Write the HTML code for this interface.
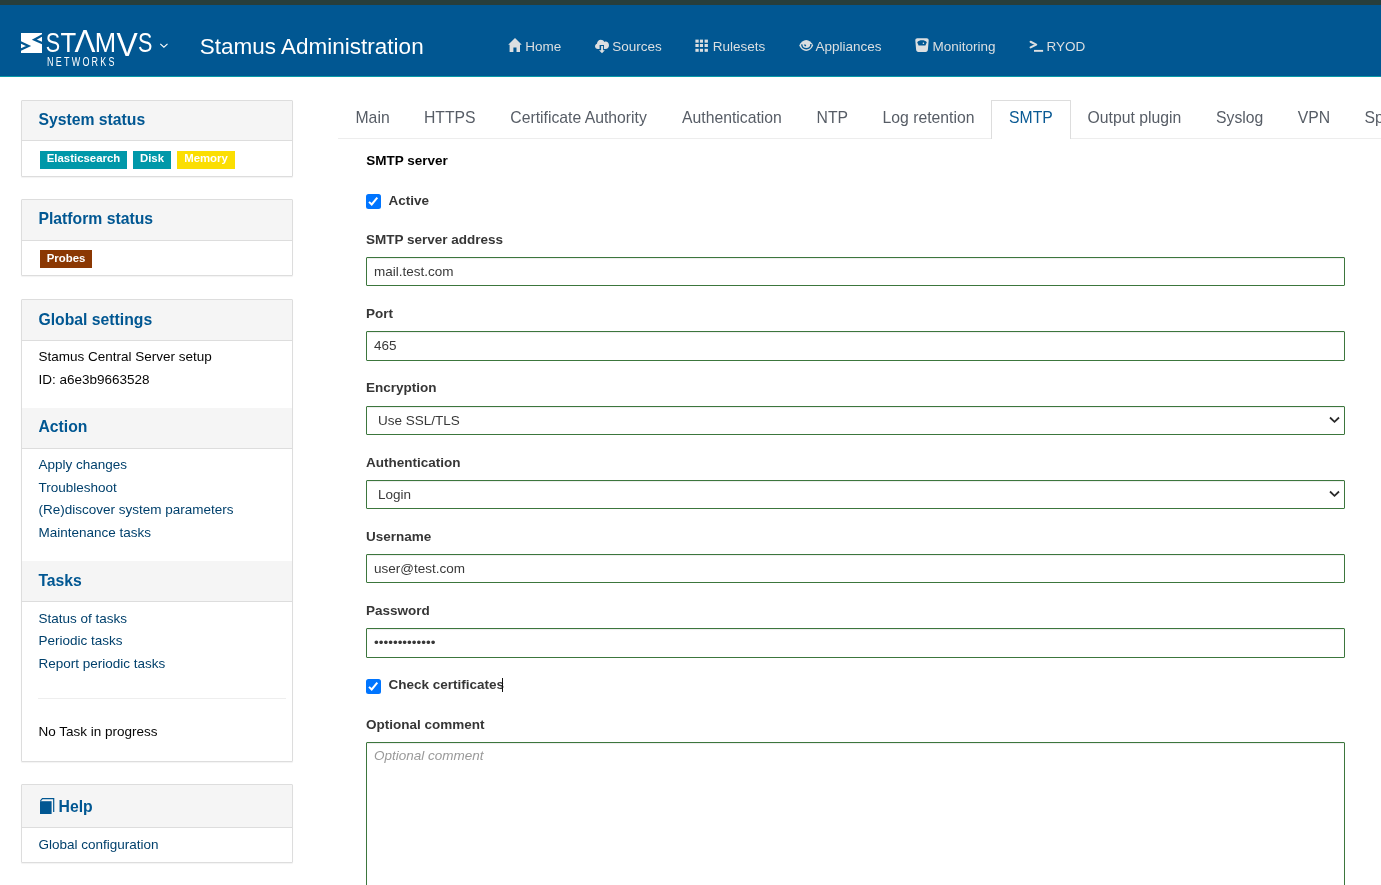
<!DOCTYPE html>
<html lang="en">
<head>
<meta charset="utf-8">
<title>Stamus Administration</title>
<style>
*{box-sizing:border-box}
html,body{margin:0;padding:0}
body{width:1381px;height:885px;overflow:hidden;background:#fff;color:#050505;
  font-family:"Liberation Sans",Arial,sans-serif;font-size:13.5px;line-height:22.5px;position:relative;will-change:transform}
a{color:#00406c;text-decoration:none}
.topbar{position:absolute;left:0;top:0;width:1381px;height:5px;background:#283e3b}
.navbar{position:absolute;left:0;top:5px;width:1381px;height:72px;background:#015792;border-bottom:1px solid #0a9aa8}
.brand{position:absolute;left:0;top:0;width:180px;height:71px;display:block}
.brand svg{position:absolute;left:0;top:0}
.title{position:absolute;left:199.8px;top:28.5px;font-size:22.5px;line-height:26px;color:#fff;white-space:nowrap}
.nav{position:absolute;left:491px;top:30px;margin:0;padding:0;list-style:none;display:flex;white-space:nowrap}
.nav li{display:block;margin:0;padding:0}
.nav a{display:block;color:#dcdfe1;padding:0 16.875px;font-size:13.5px;line-height:24px;height:24px}
.gi{display:inline-block;width:13.5px;height:13.5px;vertical-align:-0.5px;position:relative}
.gi svg{position:absolute;left:0;top:0;overflow:visible}

/* sidebar */
.sidebar{position:absolute;left:21px;top:100px;width:272px}
.panel{border:1px solid #ddd;border-radius:1px;background:#fff;margin:0 0 22px 0;box-shadow:0 1px 1px rgba(0,0,0,.05)}
.panel-heading{background:#f5f5f5;border-bottom:1px solid #ddd;height:41px;padding:0 0 0 16.4px}
.panel-heading h2{margin:0;font-size:15.75px;line-height:38px;font-weight:bold;color:#015792}
.panel-body{padding:0 0 0 16.4px}
.lbl{display:inline-block;height:18px;line-height:15px;font-size:11.4px;font-weight:bold;color:#fff;padding:0;text-align:center;vertical-align:top;margin-right:6px;white-space:nowrap}
.lbl.teal{background:#0098a9}
.lbl.yellow{background:#fbde02}
.lbl.brown{background:#8b3803}
ul.links{list-style:none;margin:0;padding:0}
ul.links li{height:22.5px;line-height:22.5px;white-space:nowrap}

/* main */
.main{position:absolute;left:338px;top:100px;width:1043px;height:785px;overflow:hidden}
.tabs{position:absolute;left:0;top:0;width:1100px;height:39px;border-bottom:1px solid #ededed;margin:0;padding:0;list-style:none}
.tabs li{position:absolute;top:0;height:39px;font-size:15.75px;line-height:36.5px;color:#575d66;white-space:nowrap}
.tabs li.active{border:1px solid #ddd;border-bottom:0;background:#fff;color:#0a5a94;height:39px;border-radius:1px 1px 0 0}
form{position:absolute;left:28px;top:0;width:979px;margin:0}
legend{position:absolute;left:0.3px;top:50px;font-size:13.5px;font-weight:bold;color:#000;line-height:22px;padding:0}
label{position:absolute;left:0;font-size:13.5px;font-weight:bold;color:#363636;line-height:22px;white-space:nowrap}
.fc{position:absolute;left:0;width:979px;height:29.25px;border:1px solid #3c763d;border-radius:1px;background:#fff;
  font-family:"Liberation Sans",Arial,sans-serif;font-size:13.5px;color:#393939;padding:0 7px;margin:0;outline:0;line-height:27px;
  box-shadow:inset 0 1px 1px rgba(0,0,0,.075)}
div.fc{padding-left:11px}
.fc svg{position:absolute;right:4px;top:9.6px}
textarea.fc{height:200px;padding:2px 7px;resize:none;line-height:22px;overflow:hidden}
textarea.fc::placeholder{color:#999;font-style:italic;opacity:1}
.cb{position:absolute;left:0.1px;width:14.8px;height:14.7px;background:#0075ff;border-radius:2.5px}
.cb svg{position:absolute;left:0;top:0}
.caret{position:absolute;left:136px;top:577.5px;width:1px;height:14px;background:#111}
</style>
</head>
<body>
<div class="topbar"></div>
<nav class="navbar">
  <a class="brand" href="#">
    <svg width="180" height="71" viewBox="0 5 180 71">
      <rect x="21" y="33" width="21" height="20" fill="#fff"/>
      <svg x="21" y="33" width="21" height="20" viewBox="21 33 21 20"><path d="M43.5 34.6 L34.3 39.7 L43.5 43.68" fill="none" stroke="#015792" stroke-width="2.2" stroke-linejoin="miter" stroke-miterlimit="10"/><path d="M19.5 41.8 L28.5 46 L19.5 50.1" fill="none" stroke="#015792" stroke-width="2.2" stroke-linejoin="miter" stroke-miterlimit="10"/></svg>
      <g fill="#fff" font-family="Liberation Sans, Arial, sans-serif">
        <text transform="translate(45.8 52) scale(0.78 1)" font-size="27.6">S</text>
        <text transform="translate(60.6 52) scale(0.93 1)" font-size="27.6">T</text>
        <text transform="translate(74.4 52) scale(0.98 1)" font-size="32">Λ</text>
        <text transform="translate(94.7 52) scale(0.93 1)" font-size="27.6">M</text>
        <text transform="translate(116.6 55.6) scale(0.98 1)" font-size="32.5">V</text>
        <text transform="translate(138 52) scale(0.78 1)" font-size="27.6">S</text>
        <text transform="translate(47 66) scale(0.66 1)" font-size="13.6" letter-spacing="3.4">NETWORKS</text>
      </g>
      <path d="M160.3 43.8 L163.9 47.2 L167.5 43.8" fill="none" stroke="#fff" stroke-width="1.1"/>
    </svg>
  </a>
  <span class="title">Stamus Administration</span>
  <ul class="nav">
    <li><a href="#"><span class="gi"><svg width="14" height="14" viewBox="0 0 14 14" style="left:0.5px"><path d="M7 0 L13.8 6.8 H12 V14 H8.5 V9.5 H5.4 V14 H1.6 V6.8 H0.2 Z" fill="#dcdfe1"/></svg></span> Home</a></li>
    <li><a href="#"><span class="gi"><svg width="14" height="16" viewBox="0 0 14 16"><path d="M3 11 C1.2 11 0 9.8 0 8.3 C0 7 0.9 6 2 5.7 C2 3.4 3.6 1.7 5.8 1.7 C7.4 1.7 8.7 2.6 9.3 3.9 C9.7 3.7 10.2 3.6 10.6 3.6 C12.5 3.6 14 5.1 14 7.2 C14 9.3 12.5 11 10.5 11 H9 V7 H4.6 V11 Z M6.1 8 H8.1 V12.3 H9.9 L7 15.3 L4 12.3 H6.1 Z" fill="#dcdfe1"/></svg></span> Sources</a></li>
    <li><a href="#"><span class="gi"><svg width="14" height="14" viewBox="0 0 14 14"><g fill="#dcdfe1"><rect x="0.4" y="1.6" width="3.3" height="3.1"/><rect x="4.9" y="1.6" width="3.1" height="3.1"/><rect x="9.6" y="1.6" width="3.3" height="3.1"/><rect x="0.4" y="6" width="3.3" height="3"/><rect x="4.9" y="6" width="3.1" height="3"/><rect x="9.6" y="6" width="3.3" height="3"/><rect x="0.4" y="10.8" width="3.3" height="3"/><rect x="4.9" y="10.8" width="3.1" height="3"/><rect x="9.6" y="10.8" width="3.3" height="3"/></g></svg></span> Rulesets</a></li>
    <li><a href="#"><span class="gi"><svg width="15" height="14" viewBox="0 0 15 14" style="top:1px"><path d="M0.2 6.6 C1.8 3.2 4.4 1.1 7.2 1.1 C10 1.1 12.6 3.2 14.2 6.6 C12.6 10 10 12.1 7.2 12.1 C4.4 12.1 1.8 10 0.2 6.6 Z" fill="#dcdfe1"/><path d="M2.9 5.3 C2.4 8.2 4.6 9.7 7.3 9.7 C10 9.7 12.2 8.2 11.9 5" fill="none" stroke="#015792" stroke-width="1.4"/><ellipse cx="6.2" cy="6.3" rx="1.1" ry="0.8" transform="rotate(40 6.2 6.3)" fill="#015792"/></svg></span> Appliances</a></li>
    <li><a href="#"><span class="gi"><svg width="14" height="14" viewBox="0 0 14 14"><path d="M2.4 0.3 H11.6 C12.9 0.3 13.7 1.1 13.7 2.4 L12.9 11.6 C12.8 13 12 14 10.6 14 H3.4 C2 14 1.2 13 1.1 11.6 L0.3 2.4 C0.3 1.1 1.1 0.3 2.4 0.3 Z" fill="#dcdfe1"/><path d="M2.2 4.3 C3.4 2.7 5 2.2 7 2.2 C9 2.2 10.6 2.7 11.8 4.3 L10.4 7.4 H3.6 Z" fill="#015792"/><circle cx="8.4" cy="5.3" r="0.8" fill="#eee"/></svg></span> Monitoring</a></li>
    <li><a href="#"><span class="gi"><svg width="14" height="14" viewBox="0 0 14 14"><path d="M1.6 3.8 L7.2 6.6 L1.6 9.4" fill="none" stroke="#dcdfe1" stroke-width="2.1" stroke-linecap="round" stroke-linejoin="round"/><rect x="5" y="11.9" width="9.1" height="1.9" fill="#dcdfe1"/></svg></span> RYOD</a></li>
  </ul>
</nav>

<aside class="sidebar">
  <section class="panel" style="height:77px">
    <div class="panel-heading" style="height:40px"><h2>System status</h2></div>
    <div class="panel-body" style="padding-top:10px;padding-left:18px"><span class="lbl teal" style="width:87px">Elasticsearch</span><span class="lbl teal" style="width:38px">Disk</span><span class="lbl yellow" style="width:58px">Memory</span></div>
  </section>
  <section class="panel" style="height:77px;margin-bottom:23px">
    <div class="panel-heading"><h2>Platform status</h2></div>
    <div class="panel-body" style="padding-top:9px;padding-left:18px"><span class="lbl brown" style="width:52px;line-height:17px">Probes</span></div>
  </section>
  <section class="panel" style="height:463px">
    <div class="panel-heading"><h2 style="line-height:39px">Global settings</h2></div>
    <div class="panel-body" style="height:67px;padding-top:5px">
      <div style="height:23px">Stamus Central Server setup</div>
      <div style="height:23px">ID: a6e3b9663528</div>
    </div>
    <div class="panel-heading"><h2 style="line-height:38.5px">Action</h2></div>
    <div class="panel-body" style="height:112px;padding-top:4.6px">
      <ul class="links">
        <li style="height:23px"><a href="#">Apply changes</a></li>
        <li style="height:22px"><a href="#">Troubleshoot</a></li>
        <li style="height:23px"><a href="#">(Re)discover system parameters</a></li>
        <li><a href="#">Maintenance tasks</a></li>
      </ul>
    </div>
    <div class="panel-heading"><h2 style="line-height:40px">Tasks</h2></div>
    <div class="panel-body" style="height:159px;padding-top:5.5px">
      <ul class="links">
        <li><a href="#">Status of tasks</a></li>
        <li><a href="#">Periodic tasks</a></li>
        <li><a href="#">Report periodic tasks</a></li>
      </ul>
      <div style="height:1px;background:#eee;margin:23px 6px 0 0"></div>
      <div style="margin-top:21.5px">No Task in progress</div>
    </div>
  </section>
  <section class="panel" style="height:79px">
    <div class="panel-heading" style="height:43px"><h2 style="line-height:43px"><span class="gi" style="width:14.2px;height:16px;vertical-align:-2px;margin-left:1.6px"><svg width="16" height="17" viewBox="0 0 16 17"><path d="M0 3.2 H11.6 V16 H0 Z" fill="#015792"/><path d="M0.4 2.8 L2.4 0.7 H13.7 V14" fill="none" stroke="#015792" stroke-width="1.2"/></svg></span> Help</h2></div>
    <div class="panel-body" style="padding-top:5.5px"><a href="#">Global configuration</a></div>
  </section>
</aside>

<main class="main">
  <ul class="tabs">
    <li style="left:17.5px">Main</li>
    <li style="left:86px">HTTPS</li>
    <li style="left:172.3px">Certificate Authority</li>
    <li style="left:344px">Authentication</li>
    <li style="left:478.6px">NTP</li>
    <li style="left:544.5px">Log retention</li>
    <li class="active" style="left:653px;width:80px;padding-left:17.1px;line-height:34.5px">SMTP</li>
    <li style="left:749.5px">Output plugin</li>
    <li style="left:878px">Syslog</li>
    <li style="left:959.8px">VPN</li>
    <li style="left:1026.5px">Splunk</li>
  </ul>
  <form>
    <legend>SMTP server</legend>
    <span class="cb" style="top:94px"><svg width="15" height="15" viewBox="0 0 15 15"><path d="M3.0 7.9 L5.7 10.5 L11.3 3.7" fill="none" stroke="#fff" stroke-width="2"/></svg></span>
    <label style="left:22.5px;top:90px">Active</label>
    <label style="top:128.5px">SMTP server address</label>
    <input class="fc" type="text" value="mail.test.com" style="top:157.05px">
    <label style="top:202.75px">Port</label>
    <input class="fc" type="text" value="465" style="top:231.30px">
    <label style="top:277.0px">Encryption</label>
    <div class="fc" style="top:305.55px">Use SSL/TLS<svg width="11" height="8" viewBox="0 0 11 8"><path d="M1 1.5 L5.5 5.8 L10 1.5" fill="none" stroke="#2a2a2a" stroke-width="1.8"/></svg></div>
    <label style="top:352px">Authentication</label>
    <div class="fc" style="top:379.80px">Login<svg width="11" height="8" viewBox="0 0 11 8"><path d="M1 1.5 L5.5 5.8 L10 1.5" fill="none" stroke="#2a2a2a" stroke-width="1.8"/></svg></div>
    <label style="top:425.5px">Username</label>
    <input class="fc" type="text" value="user@test.com" style="top:454.05px">
    <label style="top:499.75px">Password</label>
    <input class="fc" type="password" value="aaaaaaaaaaaaa" style="top:528.30px">
    <span class="cb" style="top:579px"><svg width="15" height="15" viewBox="0 0 15 15"><path d="M3.0 7.9 L5.7 10.5 L11.3 3.7" fill="none" stroke="#fff" stroke-width="2"/></svg></span>
    <label style="left:22.4px;top:574px">Check certificates</label>
    <span class="caret"></span>
    <label style="top:613.5px">Optional comment</label>
    <textarea class="fc" placeholder="Optional comment" style="top:642px"></textarea>
  </form>
</main>
</body>
</html>
